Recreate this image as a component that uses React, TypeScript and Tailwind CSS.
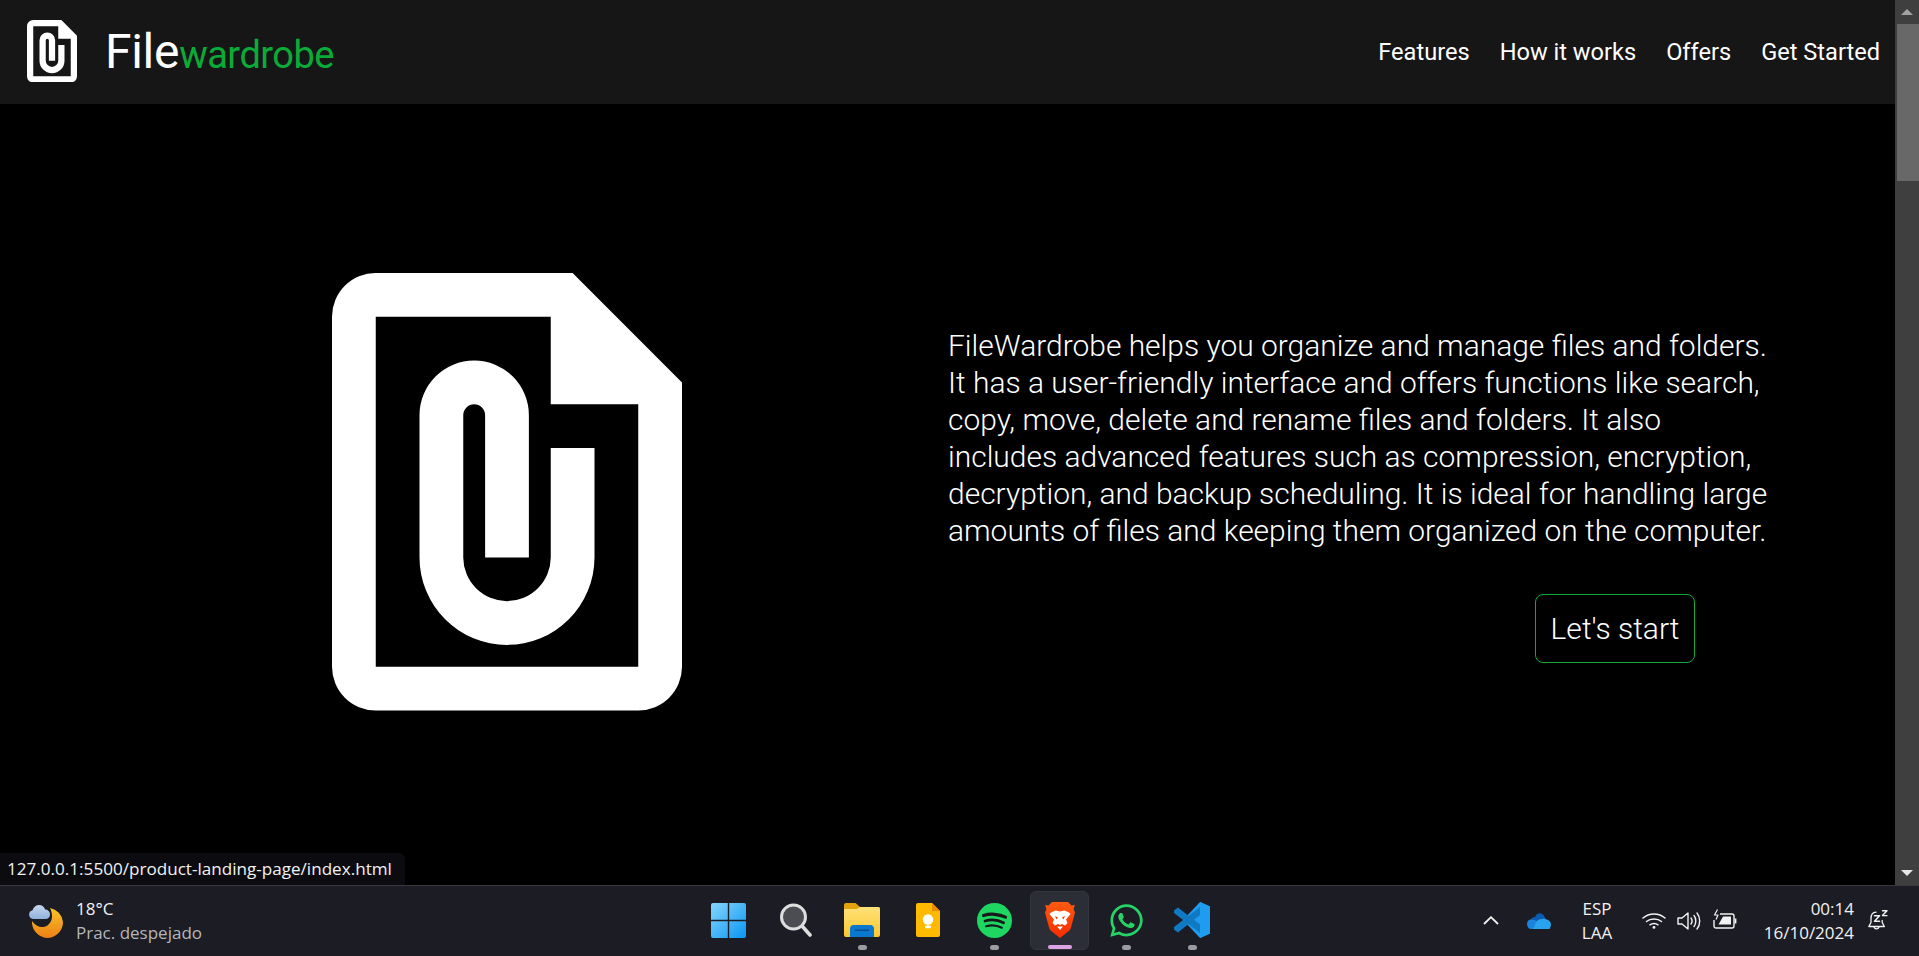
import { FaWhatsapp } from 'react-icons/fa';

const roboto = 'font-[Roboto,sans-serif]';
const segoe = "font-['Open_Sans',sans-serif]";

const NAV_LINKS = ['Features', 'How it works', 'Offers', 'Get Started'];

function FileClipLogo({ className }: { className?: string }) {
  return (
    <svg viewBox="0 0 8 10" className={className} fill="#fff" fillRule="evenodd">
      <path d="M1 0H5.5L8 2.5V9A1 1 0 0 1 7 10H1A1 1 0 0 1 0 9V1A1 1 0 0 1 1 0Z M1 1V9H7V3H5V1Z M2 3.25A1.25 1.25 0 0 1 4.5 3.25V6.5H3.5V3.25A.25 .25 0 0 0 3 3.25V6.5A1 1 0 0 0 5 6.5V4H6V6.5A2 2 0 0 1 2 6.5Z" />
    </svg>
  );
}

function WeatherIcon() {
  return (
    <svg width="35" height="33" viewBox="0 0 35 33">
      <defs>
        <linearGradient id="moon" x1="0" y1="0" x2="0" y2="1">
          <stop offset="0" stopColor="#f6c527" />
          <stop offset="1" stopColor="#ee7f16" />
        </linearGradient>
        <linearGradient id="cloud" x1="0" y1="0" x2="0" y2="1">
          <stop offset="0" stopColor="#c4d6ee" />
          <stop offset="1" stopColor="#8fb2dc" />
        </linearGradient>
      </defs>
      <path d="M22 3A16 16 0 0 1 35 17A16 16 0 0 1 19 33A16 16 0 0 1 4 16C8 22 15 24 20 20C25 16 25 9 22 3Z" fill="url(#moon)" />
      <path d="M5 14A4.5 4.5 0 0 1 4.5 5.2C5.5 2 8 0 11 0C14 0 16.4 2 17.2 4.6A4.8 4.8 0 0 1 22 9.5A4.6 4.6 0 0 1 18 14Z" fill="url(#cloud)" />
    </svg>
  );
}

function WindowsIcon() {
  return (
    <svg width="35" height="35" viewBox="0 0 35 35">
      <defs>
        <linearGradient id="win" x1="0" y1="0" x2="1" y2="1">
          <stop offset="0" stopColor="#86d6fb" />
          <stop offset="1" stopColor="#0a95f5" />
        </linearGradient>
      </defs>
      <path d="M2 0H16.8V16.8H0V2A2 2 0 0 1 2 0Z M18.2 0H33A2 2 0 0 1 35 2V16.8H18.2Z M0 18.2H16.8V35H2A2 2 0 0 1 0 33Z M18.2 18.2H35V33A2 2 0 0 1 33 35H18.2Z" fill="url(#win)" />
    </svg>
  );
}

function SearchIcon() {
  return (
    <svg width="32" height="34" viewBox="0 0 32 34">
      <circle cx="13.5" cy="14" r="12" fill="#4c4c53" stroke="#dedede" strokeWidth="3" />
      <path d="M22.5 23.5L30 32" stroke="#dedede" strokeWidth="3.6" strokeLinecap="round" />
    </svg>
  );
}

function FolderIcon() {
  return (
    <svg width="36" height="34" viewBox="0 0 36 34">
      <defs>
        <linearGradient id="folder" x1="0" y1="0" x2="0" y2="1">
          <stop offset="0" stopColor="#ffe27a" />
          <stop offset="1" stopColor="#fcc62f" />
        </linearGradient>
      </defs>
      <path d="M2 0H11.5L16 4H34A2 2 0 0 1 36 6V12H0V2A2 2 0 0 1 2 0Z" fill="#e3a20e" />
      <path d="M0 6H13L16 4H34A2 2 0 0 1 36 6V32A2 2 0 0 1 34 34H2A2 2 0 0 1 0 32Z" fill="url(#folder)" />
      <path d="M6 34V26A3.5 3.5 0 0 1 9.5 22H26.5A3.5 3.5 0 0 1 30 26V34Z" fill="#0a78cf" />
      <rect x="11" y="26.5" width="14" height="1.6" fill="#064f8e" />
    </svg>
  );
}

function KeepIcon() {
  return (
    <svg width="24" height="34" viewBox="0 0 24 34">
      <path d="M2 0H16L24 8V32A2 2 0 0 1 22 34H2A2 2 0 0 1 0 32V2A2 2 0 0 1 2 0Z" fill="#ffba00" />
      <path d="M16 0L24 8H16Z" fill="#f08a00" />
      <circle cx="12" cy="16.5" r="5.2" fill="#fff" />
      <rect x="9.2" y="22.6" width="5.6" height="2.6" rx="0.6" fill="#fff" />
    </svg>
  );
}

function SpotifyIcon() {
  return (
    <svg width="35" height="35" viewBox="0 0 35 35">
      <circle cx="17.5" cy="17.5" r="17.5" fill="#1ed760" />
      <g fill="none" stroke="#17181c" strokeLinecap="round">
        <path d="M6.5 12.5C13 10.4 22 10.8 28.5 14.2" strokeWidth="3.2" />
        <path d="M8 18C13.5 16.4 21 16.8 26.6 19.8" strokeWidth="2.7" />
        <path d="M9.2 23.2C14 22 20 22.2 24.8 24.8" strokeWidth="2.2" />
      </g>
    </svg>
  );
}

function BraveIcon() {
  return (
    <svg width="30" height="36" viewBox="0 0 30 36">
      <defs>
        <linearGradient id="brave" x1="0" y1="0" x2="0" y2="1">
          <stop offset="0" stopColor="#ff5a12" />
          <stop offset="1" stopColor="#f52c00" />
        </linearGradient>
      </defs>
      <path d="M7 0H23L26.5 3.5L30 3L28.5 7L30 10.5L26 25.5C25.5 27.5 24 29 22.5 30L15 36L7.5 30C6 29 4.5 27.5 4 25.5L0 10.5L1.5 7L0 3L3.5 3.5Z" fill="url(#brave)" />
      <path d="M15 9.5L19.5 8.5L24 10.5L25.5 12L21 17.5L22.5 21L20 23.5L17 22L15 23L13 22L10 23.5L7.5 21L9 17.5L4.5 12L6 10.5L10.5 8.5Z" fill="#fff" />
      <path d="M10 14L13 15.5L11.5 17.5Z M20 14L17 15.5L18.5 17.5Z" fill="#f5400a" />
      <path d="M12 24.5H18L15 28Z" fill="#fff" />
    </svg>
  );
}

function VSCodeIcon() {
  return (
    <svg width="36" height="36" viewBox="0 0 36 36">
      <path d="M26 0L36 4.5V31.5L26 36L9 18Z" fill="#1f9cf0" />
      <path d="M26 0L36 4.5V6L26 13L14 22.5L4 30.5L0 27.5V25L26 5Z" fill="#0f79c4" />
      <path d="M4 5.5L0 8.5V11L26 31V36L36 31.5V30L11 11Z" fill="#0f79c4" />
      <path d="M26 0L36 4.5V31.5L26 36Z" fill="#1f9cf0" />
    </svg>
  );
}

function OneDriveIcon() {
  return (
    <svg width="24" height="16" viewBox="0 0 24 16">
      <path d="M9.5 1.5C12 -0.5 15.5 0 17 2.8L19 6.5L8 11L3.5 7.5C4 5 6 3.8 8 4Z" fill="#0a5cb0" />
      <path d="M3 6.5C1 7 0 9 0 11C0 14 2 16 4 16H20L12 9L7.5 7Z" fill="#1c84dc" />
      <path d="M10 8C12 6 16 5.2 19 6.2C22 6.8 24 9 24 11.5C24 13 23.5 14.5 22.5 16H6C8 13 8 10 10 8Z" fill="#2aa3ee" />
    </svg>
  );
}

function WifiIcon() {
  return (
    <svg width="24" height="17" viewBox="0 0 24 17" fill="none" stroke="#f2f2f2" strokeWidth="1.5" strokeLinecap="round">
      <path d="M1 6C7 0.5 17 0.5 23 6" />
      <path d="M4.5 9.5C8.5 6 15.5 6 19.5 9.5" />
      <path d="M8 12.8C10.2 11 13.8 11 16 12.8" />
      <circle cx="12" cy="15.4" r="1.4" fill="#f2f2f2" stroke="none" />
    </svg>
  );
}

function VolumeIcon() {
  return (
    <svg width="24" height="20" viewBox="0 0 24 20" fill="none" stroke="#f2f2f2" strokeWidth="1.4" strokeLinejoin="round" strokeLinecap="round">
      <path d="M1 7H5L11 2V18L5 13H1Z" />
      <path d="M14 7C15.2 8.6 15.2 11.4 14 13" />
      <path d="M17 4.5C19.4 7.4 19.4 12.6 17 15.5" />
      <path d="M20 2C23.6 6.2 23.6 13.8 20 18" />
    </svg>
  );
}

function BatteryIcon() {
  return (
    <svg width="24" height="20" viewBox="0 0 24 20" fill="none" stroke="#f2f2f2" strokeWidth="1.4" strokeLinejoin="round">
      <path d="M7 5H19A2 2 0 0 1 21 7V17A2 2 0 0 1 19 19H3A2 2 0 0 1 1 17V11" />
      <path d="M22.5 9.5V14.5" strokeWidth="1.8" />
      <path d="M5.5 15.5L10 7.5H18V15.5Z" fill="#f2f2f2" stroke="none" />
      <path d="M4.5 0.5L1.5 6H5L3 10.5" strokeWidth="1.2" />
    </svg>
  );
}

function BellSnoozeIcon() {
  return (
    <svg width="20" height="21" viewBox="0 0 20 21" fill="none" stroke="#f2f2f2" strokeWidth="1.3" strokeLinejoin="round" strokeLinecap="round">
      <path d="M8 2.2C4.2 2.4 3 5.8 3 8.5V12.5L0.8 16.5H16.4L14.2 12.5V10.5" />
      <path d="M6 17A2.6 2.6 0 0 0 11 17" />
      <path d="M6.5 5.8H11.5L6.5 11.2H11.5" strokeWidth="1.5" />
      <path d="M14.5 0.8H19L14.5 5.6H19" strokeWidth="1.4" />
    </svg>
  );
}

function ScrollBar() {
  return (
    <div className="w-[24px] bg-[#3f3f3f] flex flex-col items-stretch shrink-0">
      <div className="h-[24px] flex items-center justify-center">
        <div className="w-0 h-0 border-x-[6px] border-x-transparent border-b-[6px] border-b-[#a3a3a3]" />
      </div>
      <div className="h-[157px] ml-[2px] bg-[#686868]" />
      <div className="flex-1" />
      <div className="h-[24px] flex items-center justify-center">
        <div className="w-0 h-0 border-x-[6px] border-x-transparent border-t-[6px] border-t-[#e8e8e8]" />
      </div>
    </div>
  );
}

function TaskbarApp({ children, dot, active }: { children: React.ReactNode; dot?: boolean; active?: boolean }) {
  return (
    <div className="relative w-[66px] h-[71px] flex items-center justify-center">
      {active && <div className="absolute left-[3px] top-[6px] w-[59px] h-[59px] rounded-md bg-[#2b2d37] border border-[#33353f]" />}
      <div className="relative -mt-[1px] flex items-center justify-center">{children}</div>
      {dot && <div className="absolute left-[29px] top-[60px] w-[9px] h-[5px] rounded-full bg-[#9b9ba0]" />}
      {active && <div className="absolute left-[21px] top-[60px] w-[24px] h-[4px] rounded-full bg-[#dba4e4]" />}
    </div>
  );
}

function Taskbar() {
  return (
    <div className={`h-[71px] shrink-0 bg-[#1b1c24] border-t border-[#3a3a3e] flex items-stretch relative text-[17px] text-[#f2f2f2] ${segoe}`}>
      <div className="w-[695px] flex items-center pl-[28px]">
        <WeatherIcon />
        <div className="ml-[13px] leading-[24px] -mt-[1px]">
          <div>18°C</div>
          <div className="text-[#b6b6ba]">Prac. despejado</div>
        </div>
      </div>
      <div className="flex -mt-[1px]">
        <TaskbarApp><WindowsIcon /></TaskbarApp>
        <div className="w-[2px]" />
        <TaskbarApp><SearchIcon /></TaskbarApp>
        <TaskbarApp dot><FolderIcon /></TaskbarApp>
        <TaskbarApp><KeepIcon /></TaskbarApp>
        <TaskbarApp dot><SpotifyIcon /></TaskbarApp>
        <TaskbarApp active><BraveIcon /></TaskbarApp>
        <TaskbarApp dot><FaWhatsapp className="w-[37px] h-[37px] text-[#25d366]" /></TaskbarApp>
        <TaskbarApp dot><VSCodeIcon /></TaskbarApp>
      </div>
      <div className="flex-1 flex items-center -mt-[1px]">
        <svg width="16" height="9" viewBox="0 0 16 9" fill="none" stroke="#f2f2f2" strokeWidth="1.8" className="ml-[258px]">
          <path d="M1 8L8 1.2L15 8" />
        </svg>
        <div className="ml-[28px]"><OneDriveIcon /></div>
        <div className="ml-[25px] w-[42px] text-center leading-[24px]">
          <div>ESP</div>
          <div>LAA</div>
        </div>
        <div className="ml-[24px]"><WifiIcon /></div>
        <div className="ml-[11px]"><VolumeIcon /></div>
        <div className="ml-[12px] -mt-[3px]"><BatteryIcon /></div>
        <div className="ml-[18px] w-[99px] text-right leading-[24px]">
          <div>00:14</div>
          <div>16/10/2024</div>
        </div>
        <div className="ml-[14px]"><BellSnoozeIcon /></div>
      </div>
    </div>
  );
}

export default function App() {
  return (
    <div className={`relative h-[956px] w-full flex flex-col overflow-hidden bg-black ${roboto}`}>
      <div className="flex flex-1 min-h-0">
        <div className="flex-1 min-w-0">
          <header className="h-[104px] bg-[#171617] flex items-center justify-between pl-[27px] pr-[15px]">
            <div className="flex items-center">
              <FileClipLogo className="w-[50px] h-[62.5px] -mt-[2px]" />
              <div className="ml-[28px] flex items-baseline font-normal">
                <span className="text-[48px] text-white leading-none tracking-[-0.3px]">File</span>
                <span className="text-[38px] text-[#0aab38] leading-none tracking-[-0.5px]">wardrobe</span>
              </div>
            </div>
            <nav className="flex items-center gap-[30px] mt-[1px] text-[23.6px] text-white">
              {NAV_LINKS.map((link) => (
                <a key={link}>{link}</a>
              ))}
            </nav>
          </header>

          <main className="flex items-start pl-[332px] pt-[169.3px]">
            <FileClipLogo className="w-[350px] h-[437.5px] shrink-0" />
            <div className="ml-[266px] w-[830px] pt-[54px] text-[29.96px] leading-[37px] font-light text-white">
              <p>
                FileWardrobe helps you organize and manage files and folders.
                <br />
                It has a user-friendly interface and offers functions like search,
                <br />
                copy, move, delete and rename files and folders. It also
                <br />
                includes advanced features such as compression, encryption,
                <br />
                decryption, and backup scheduling. It is ideal for handling large
                <br />
                amounts of files and keeping them organized on the computer.
              </p>
              <button className="mt-[45px] ml-[587px] w-[160px] h-[69px] rounded-[8px] border border-[#0aab38] text-[30px] font-light text-white">
                Let's start
              </button>
            </div>
          </main>
        </div>
        <ScrollBar />
      </div>

      <Taskbar />

      <div className={`absolute left-0 top-[853px] w-[405px] h-[32px] rounded-tr-md bg-[#0c0c10] pl-[7px] text-[17.1px] leading-[32px] text-[#f2f2f2] ${segoe}`}>
        127.0.0.1:5500/product-landing-page/index.html
      </div>
    </div>
  );
}
